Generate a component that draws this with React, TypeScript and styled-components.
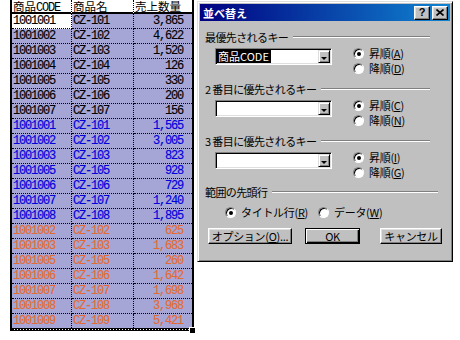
import React from "react";
import styled, { createGlobalStyle } from "styled-components";

type Tone = "black" | "blue" | "orange";

const toneColor: Record<Tone, string> = {
  black: "#000",
  blue: "#0000dc",
  orange: "#e46a34",
};

const rows: [string, string, string, Tone][] = [
  ["1001001", "CZ-101", "3,865", "black"],
  ["1001002", "CZ-102", "4,622", "black"],
  ["1001003", "CZ-103", "1,520", "black"],
  ["1001004", "CZ-104", "126", "black"],
  ["1001005", "CZ-105", "330", "black"],
  ["1001006", "CZ-106", "200", "black"],
  ["1001007", "CZ-107", "156", "black"],
  ["1001001", "CZ-101", "1,565", "blue"],
  ["1001002", "CZ-102", "3,005", "blue"],
  ["1001003", "CZ-103", "823", "blue"],
  ["1001005", "CZ-105", "928", "blue"],
  ["1001006", "CZ-106", "729", "blue"],
  ["1001007", "CZ-107", "1,240", "blue"],
  ["1001008", "CZ-108", "1,895", "blue"],
  ["1001002", "CZ-102", "625", "orange"],
  ["1001003", "CZ-103", "1,683", "orange"],
  ["1001005", "CZ-105", "260", "orange"],
  ["1001006", "CZ-106", "1,642", "orange"],
  ["1001007", "CZ-107", "1,698", "orange"],
  ["1001008", "CZ-108", "3,968", "orange"],
  ["1001009", "CZ-109", "5,421", "orange"],
];

const GlobalStyle = createGlobalStyle`
  html, body {
    margin: 0;
    padding: 0;
    background: #fff;
  }
  body {
    font-family: "Liberation Mono", "Noto Sans CJK JP", monospace;
  }
`;

const Screen = styled.div`
  position: relative;
  width: 460px;
  height: 340px;
  overflow: hidden;
  background: #fff;
`;

/* ---------- spreadsheet ---------- */

const Sheet = styled.div`
  position: relative;
  margin-left: 10px;
  width: 184px;
  box-sizing: border-box;
  border-left: 2px solid #000;
  border-right: 2px solid #000;
`;

const Grid = styled.div`
  display: grid;
  grid-template-columns: 60px 62px 58px;
`;

const HeadCell = styled.div<{ $edge?: boolean }>`
  height: 14px;
  box-sizing: border-box;
  padding-left: 1px;
  border-bottom: 2px solid #000;
  border-right: ${(p) => (p.$edge ? "none" : "1px dotted #000")};
  font-family: "Noto Sans CJK JP", sans-serif;
  font-size: 11.5px;
  line-height: 12px;
  text-decoration: underline;
  white-space: nowrap;
  color: #000;
`;

const Latin = styled.span`
  font-family: "Liberation Mono", monospace;
  font-size: 12px;
  letter-spacing: -1.2px;
`;

const Cell = styled.div<{
  $tone: Tone;
  $active?: boolean;
  $num?: boolean;
  $edge?: boolean;
  $last?: boolean;
}>`
  height: ${(p) => (p.$last ? 14 : 15)}px;
  box-sizing: border-box;
  background: ${(p) => (p.$active ? "#fff" : "#a6a6d6")};
  color: ${(p) => toneColor[p.$tone]};
  border-bottom: ${(p) => (p.$last ? "none" : "1px dotted #000")};
  border-right: ${(p) => (p.$edge ? "none" : "1px dotted #000")};
  padding: ${(p) => (p.$num ? "0 9px 0 0" : "0 0 0 1px")};
  text-align: ${(p) => (p.$num ? "right" : "left")};
  font-family: "Liberation Mono", monospace;
  font-size: 12px;
  letter-spacing: -1.2px;
  line-height: 14px;
  white-space: nowrap;
  -webkit-text-stroke: 0.15px currentColor;
`;

const SelectionEdge = styled.div`
  height: 3px;
  box-sizing: border-box;
  border-top: 1px solid #000;
  border-bottom: 1px solid #000;
  background: repeating-linear-gradient(90deg, #000 0 2px, #fff 2px 3px);
`;

const FillHandle = styled.div`
  position: absolute;
  right: -3px;
  bottom: -2px;
  width: 6px;
  height: 6px;
  box-sizing: border-box;
  background: #000;
  border-top: 1px solid #fff;
  border-left: 1px solid #fff;
`;

/* ---------- dialog ---------- */

const Dialog = styled.div`
  position: absolute;
  left: 197px;
  top: 1px;
  width: 256px;
  height: 261px;
  box-sizing: border-box;
  padding: 2px;
  background: #c0c0c0;
  border: 1px solid;
  border-color: #dfdfdf #000 #000 #dfdfdf;
  box-shadow: inset 1px 1px 0 #fff, inset -1px -1px 0 #808080;
  display: flex;
  flex-direction: column;
  font-family: "Noto Sans CJK JP", sans-serif;
  font-size: 11px;
  color: #000;
`;

const TitleBar = styled.div`
  height: 17px;
  flex: none;
  display: flex;
  align-items: center;
  padding: 0 2px 0 3px;
  background: linear-gradient(90deg, #000080, #1084d0);
`;

const TitleText = styled.span`
  color: #fff;
  font-weight: bold;
  font-size: 11px;
  line-height: 14px;
`;

const TitleButtons = styled.div`
  margin-left: auto;
  display: flex;
  gap: 2px;
`;

const TitleButton = styled.div`
  width: 16px;
  height: 14px;
  box-sizing: border-box;
  background: #c0c0c0;
  border: 1px solid;
  border-color: #fff #000 #000 #fff;
  box-shadow: inset -1px -1px 0 #808080, inset 1px 1px 0 #dfdfdf;
  display: flex;
  align-items: center;
  justify-content: center;
  font-family: "Liberation Sans", sans-serif;
  font-weight: bold;
  font-size: 11px;
  line-height: 11px;
`;

const Body = styled.div`
  display: flex;
  flex-direction: column;
  padding: 9px 0 0 5px;
`;

const Group = styled.div<{ $mb: number }>`
  display: flex;
  flex-direction: column;
  margin-bottom: ${(p) => p.$mb}px;
`;

const GroupHead = styled.div`
  display: flex;
  align-items: center;
  height: 14px;
  line-height: 14px;
  white-space: pre;
  letter-spacing: -0.6px;
`;

const Rule = styled.div<{ $mr: number }>`
  flex: 1;
  height: 0;
  border-top: 1px solid #808080;
  border-bottom: 1px solid #fff;
  margin-left: 5px;
  margin-right: ${(p) => p.$mr}px;
`;

const KeyRow = styled.div`
  display: flex;
  height: 30px;
  margin: 2px 0 0 10px;
`;

const Combo = styled.div`
  width: 117px;
  height: 17px;
  margin-top: 2px;
  box-sizing: border-box;
  padding: 1px;
  background: #fff;
  border: 1px solid;
  border-color: #808080 #fff #fff #808080;
  box-shadow: inset 1px 1px 0 #000, inset -1px -1px 0 #dfdfdf;
  display: flex;
  align-items: stretch;
`;

const ComboText = styled.span`
  background: #000;
  color: #fff;
  padding: 0 2px 0 1px;
  line-height: 13px;
  white-space: nowrap;
`;

const DropButton = styled.div`
  margin-left: auto;
  width: 12px;
  height: 13px;
  box-sizing: border-box;
  background: #c0c0c0;
  border: 1px solid;
  border-color: #dfdfdf #000 #000 #dfdfdf;
  box-shadow: inset 1px 1px 0 #fff, inset -1px -1px 0 #808080;
  display: flex;
  align-items: center;
  justify-content: center;
`;

const Arrow = styled.span`
  width: 0;
  height: 0;
  margin-top: 3px;
  border-left: 3px solid transparent;
  border-right: 3px solid transparent;
  border-top: 3px solid #000;
`;

const RadioCol = styled.div`
  display: flex;
  flex-direction: column;
  margin-left: 21px;
`;

const RadioItem = styled.div<{ $w?: number }>`
  display: flex;
  align-items: center;
  gap: 5px;
  height: 15px;
  width: ${(p) => (p.$w ? `${p.$w}px` : "auto")};
  white-space: nowrap;
  line-height: 15px;
  letter-spacing: -0.3px;
`;

const RadioDot = styled.span<{ $on?: boolean }>`
  flex: none;
  width: 11px;
  height: 11px;
  box-sizing: border-box;
  border-radius: 50%;
  background: #fff;
  border: 1px solid;
  border-color: #808080 #fff #fff #808080;
  box-shadow: inset 1px 1px 0 #000;
  display: flex;
  align-items: center;
  justify-content: center;

  &::after {
    content: "";
    width: 4px;
    height: 4px;
    border-radius: 50%;
    background: ${(p) => (p.$on ? "#000" : "transparent")};
  }
`;

const Key = styled.span`
  text-decoration: underline;
`;

const RangeRow = styled.div`
  display: flex;
  height: 14px;
  margin: 6px 0 0 20px;
`;

const ButtonRow = styled.div`
  display: flex;
  margin: 9px 0 0 3px;
`;

const Button = styled.div<{ $w: number; $ml: number; $default?: boolean }>`
  width: ${(p) => p.$w}px;
  height: 16px;
  margin-left: ${(p) => p.$ml}px;
  box-sizing: border-box;
  background: #c0c0c0;
  border: 1px solid;
  border-color: ${(p) => (p.$default ? "#000" : "#fff #000 #000 #fff")};
  box-shadow: ${(p) =>
    p.$default
      ? "inset 1px 1px 0 #fff, inset -1px -1px 0 #000, inset -2px -2px 0 #808080"
      : "inset -1px -1px 0 #808080, inset 1px 1px 0 #dfdfdf"};
  display: flex;
  align-items: center;
  justify-content: center;
  line-height: 14px;
  white-space: nowrap;
  letter-spacing: -0.3px;
`;

const Radio: React.FC<{ on?: boolean; label: string; k: string; w?: number }> = ({
  on,
  label,
  k,
  w,
}) => (
  <RadioItem $w={w}>
    <RadioDot $on={on} />
    <span>
      {label}(<Key>{k}</Key>)
    </span>
  </RadioItem>
);

interface KeyGroupProps {
  title: string;
  value?: string;
  asc: string;
  desc: string;
  mb: number;
}

const KeyGroup: React.FC<KeyGroupProps> = ({ title, value, asc, desc, mb }) => (
  <Group $mb={mb}>
    <GroupHead>
      {title}
      <Rule $mr={20} />
    </GroupHead>
    <KeyRow>
      <Combo>
        {value && <ComboText>{value}</ComboText>}
        <DropButton>
          <Arrow />
        </DropButton>
      </Combo>
      <RadioCol>
        <Radio on label="昇順" k={asc} />
        <Radio label="降順" k={desc} />
      </RadioCol>
    </KeyRow>
  </Group>
);

const App: React.FC = () => {
  return (
    <Screen>
      <GlobalStyle />
      <Sheet>
        <Grid>
          <HeadCell>
            商品<Latin>CODE</Latin>
          </HeadCell>
          <HeadCell>商品名</HeadCell>
          <HeadCell $edge>売上数量</HeadCell>
          {rows.map(([code, name, qty, tone], i) => {
            const last = i === rows.length - 1;
            return (
              <React.Fragment key={i}>
                <Cell $tone={tone} $active={i === 0} $last={last}>
                  {code}
                </Cell>
                <Cell $tone={tone} $last={last}>
                  {name}
                </Cell>
                <Cell $tone={tone} $num $edge $last={last}>
                  {qty}
                </Cell>
              </React.Fragment>
            );
          })}
        </Grid>
        <SelectionEdge />
        <FillHandle />
      </Sheet>

      <Dialog>
        <TitleBar>
          <TitleText>並べ替え</TitleText>
          <TitleButtons>
            <TitleButton>?</TitleButton>
            <TitleButton>
              <svg width="8" height="7" viewBox="0 0 8 7">
                <path d="M0.5 0.5 L7.5 6.5 M7.5 0.5 L0.5 6.5" stroke="#000" strokeWidth="1.6" />
              </svg>
            </TitleButton>
          </TitleButtons>
        </TitleBar>
        <Body>
          <KeyGroup title="最優先されるキー" value="商品CODE" asc="A" desc="D" mb={6} />
          <KeyGroup title="2 番目に優先されるキー" asc="C" desc="N" mb={6} />
          <KeyGroup title="3 番目に優先されるキー" asc="I" desc="G" mb={5} />
          <GroupHead>
            範囲の先頭行
            <Rule $mr={12} />
          </GroupHead>
          <RangeRow>
            <Radio on label="タイトル行" k="R" w={93} />
            <Radio label="データ" k="W" />
          </RangeRow>
          <ButtonRow>
            <Button $w={84} $ml={0}>
              オプション(<Key>O</Key>)...
            </Button>
            <Button $w={55} $ml={13} $default>
              OK
            </Button>
            <Button $w={62} $ml={20}>
              キャンセル
            </Button>
          </ButtonRow>
        </Body>
      </Dialog>
    </Screen>
  );
};

export default App;
